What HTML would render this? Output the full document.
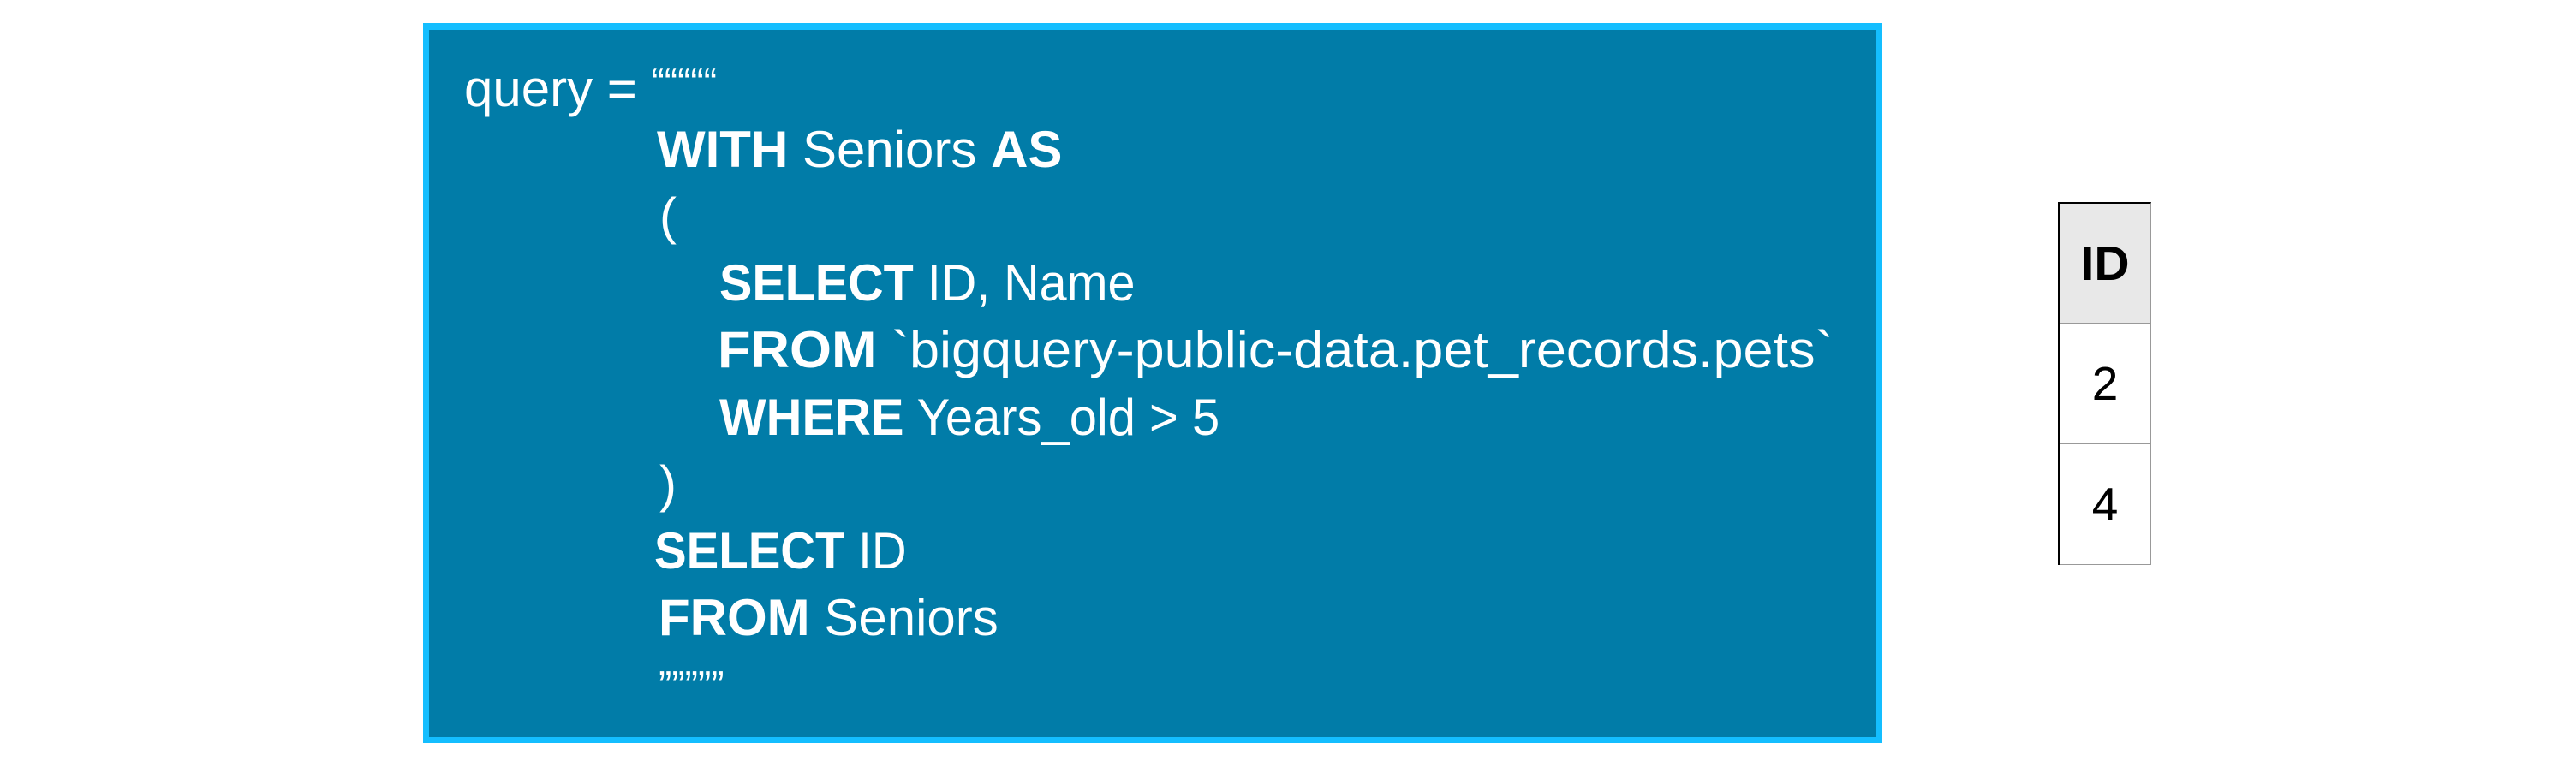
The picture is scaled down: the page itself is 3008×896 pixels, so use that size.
<!DOCTYPE html>
<html><head><meta charset="utf-8"><style>
html,body{margin:0;padding:0;background:#fff;}
body{width:3008px;height:896px;position:relative;overflow:hidden;font-family:"Liberation Sans",sans-serif;}
.box{position:absolute;left:494px;top:27px;width:1690px;height:826px;background:#017ca8;border:7px solid #14beff;border-top-width:8px;}
.l{position:absolute;color:#fff;font-size:60px;line-height:60px;white-space:pre;transform-origin:0 0;}
b{font-weight:bold;}
.t{position:absolute;left:2403px;top:236px;width:107px;border-left:2px solid #000;}
.c{height:140px;border:1px solid #999;border-left:none;border-top:none;text-align:center;font-size:55px;line-height:140px;color:#000;}
.h{background:#e8e8e8;font-weight:bold;font-size:57px;border-top:2px solid #000;height:139px;}
</style></head><body>
<div class="box"></div>
<div class="l" style="left:542px;top:66px">query = <span style="font-size:46px;vertical-align:12px">“““““</span></div>
<div class="l" style="left:767px;top:145px"><b>WITH</b> Seniors <b>AS</b></div>
<div class="l" style="left:770px;top:223px">(</div>
<div class="l" style="left:840px;top:301px;transform:scaleX(0.958)"><b>SELECT</b> ID, Name</div>
<div class="l" style="left:838px;top:379px;transform:scaleX(1.05)"><b>FROM</b> `bigquery-public-data.pet_records.pets`</div>
<div class="l" style="left:840px;top:458px;transform:scaleX(0.965)"><b>WHERE</b> Years_old &gt; 5</div>
<div class="l" style="left:770px;top:536px">)</div>
<div class="l" style="left:764px;top:614px;transform:scaleX(0.94)"><b>SELECT</b> ID</div>
<div class="l" style="left:769px;top:692px"><b>FROM</b> Seniors</div>
<div class="l" style="left:769px;top:770px;font-size:46px">”””””</div>
<div class="t">
<div class="c h">ID</div>
<div class="c">2</div>
<div class="c">4</div>
</div>
</body></html>
